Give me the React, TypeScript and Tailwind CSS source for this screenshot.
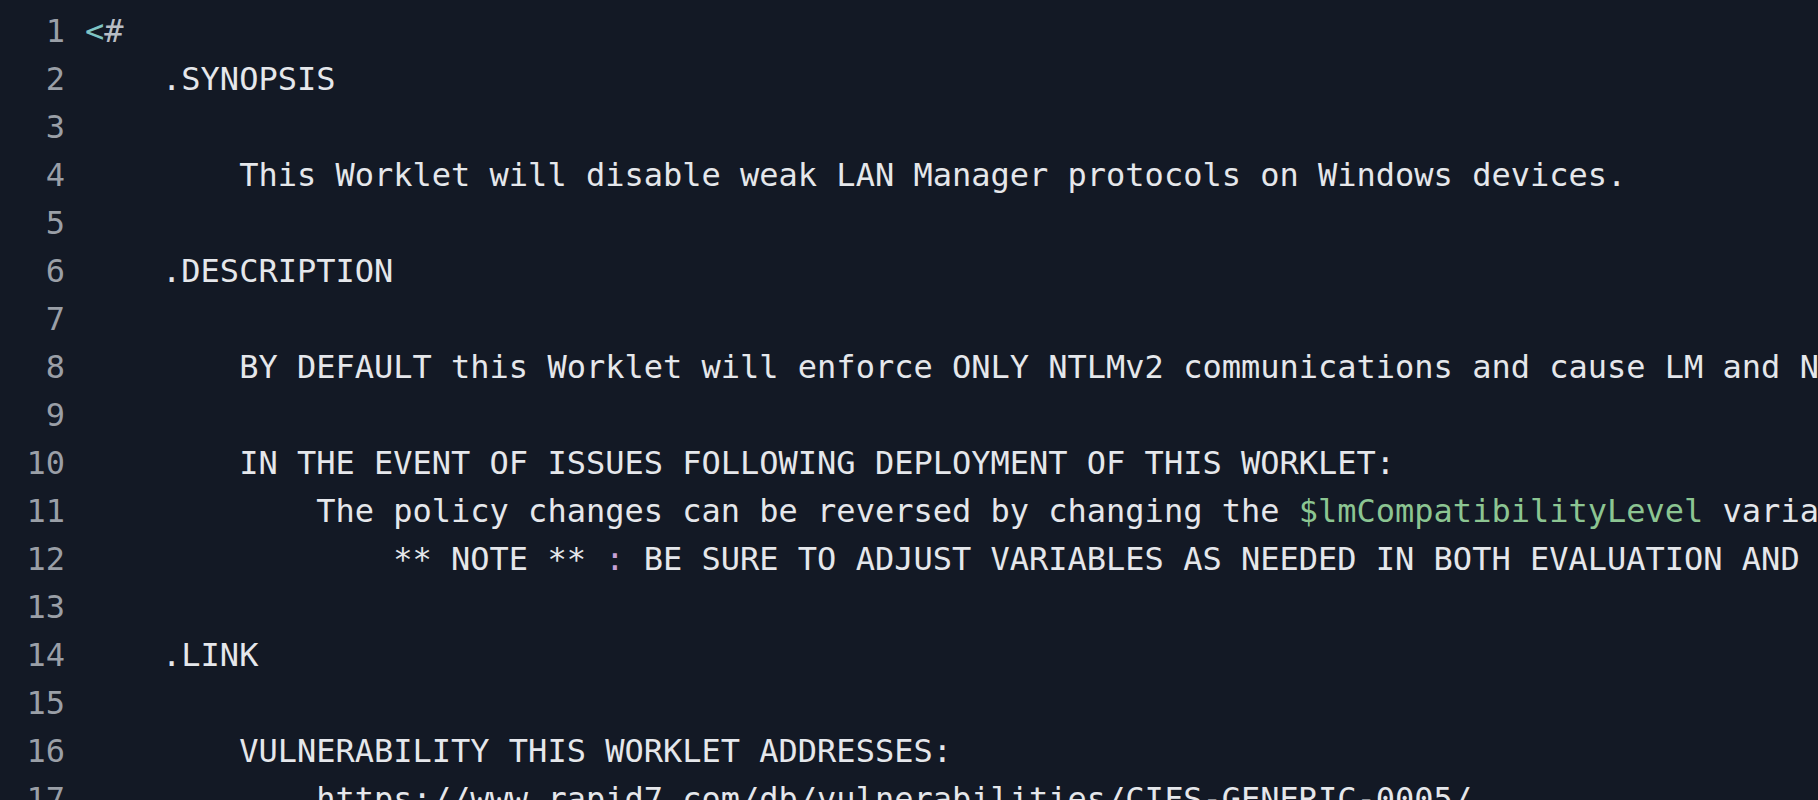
import React from "react";

type Seg = { t: string; c?: string };

const lines: Seg[][] = [
  [{ t: "<", c: "text-[#7fc4c4]" }, { t: "#", c: "text-[#b9bdc4]" }],
  [{ t: "    .SYNOPSIS" }],
  [],
  [{ t: "        This Worklet will disable weak LAN Manager protocols on Windows devices." }],
  [],
  [{ t: "    .DESCRIPTION" }],
  [],
  [{ t: "        BY DEFAULT this Worklet will enforce ONLY NTLMv2 communications and cause LM and NTLM to be refused." }],
  [],
  [{ t: "        IN THE EVENT OF ISSUES FOLLOWING DEPLOYMENT OF THIS WORKLET:" }],
  [
    { t: "            The policy changes can be reversed by changing the " },
    { t: "$lmCompatibilityLevel", c: "text-[#8cc592]" },
    { t: " variable value." },
  ],
  [
    { t: "                ** NOTE ** " },
    { t: ":", c: "text-[#c7a1d6]" },
    { t: " BE SURE TO ADJUST VARIABLES AS NEEDED IN BOTH EVALUATION AND REMEDIATION SCRIPTS" },
  ],
  [],
  [{ t: "    .LINK" }],
  [],
  [{ t: "        VULNERABILITY THIS WORKLET ADDRESSES:" }],
  [{ t: "            https://www.rapid7.com/db/vulnerabilities/CIFS-GENERIC-0005/" }],
];

export default function App() {
  return (
    <div className="w-[1818px] h-[800px] overflow-hidden bg-[#131925] pt-[7px] font-['DejaVu_Sans_Mono',monospace] text-[32px] leading-[48px] text-[#e5e7eb]">
      {lines.map((segs, i) => (
        <div key={i} className="flex h-[48px] whitespace-pre">
          <div className="w-[65px] shrink-0 text-right text-[#9a9fa7]">{i + 1}</div>
          <div className="ml-[20px]">
            {segs.map((s, j) => (
              <span key={j} className={s.c}>
                {s.t}
              </span>
            ))}
          </div>
        </div>
      ))}
    </div>
  );
}
